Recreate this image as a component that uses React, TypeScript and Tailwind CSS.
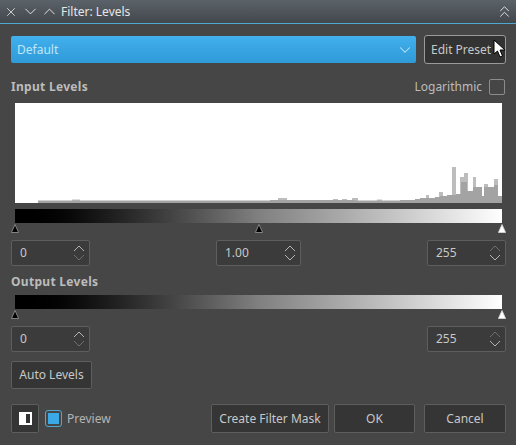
import { ChevronDown, ChevronUp, ChevronsUp, X } from 'lucide-react';

// histogram body, [x, height] steps in the 487px wide plot
const steps: [number, number][] = [
  [0, 0], [23, 2.5], [255, 3], [300, 3], [340, 2.5], [385, 3], [400, 4], [405, 5], [420, 6], [425, 7], [432, 8], [441, 9],
  [446, 21], [452, 12], [458, 16], [467, 7], [469, 16], [479, 18], [483, 7], [487, 0],
];

// thin paler spikes standing on the body, [x, width, height]
const spikes: [number, number, number][] = [
  [57, 8, 3.5], [263, 9, 5], [318, 5, 4], [327, 5, 4], [337, 6, 5], [362, 5, 3.5], [411, 3, 8], [424, 4, 11],
  [437, 4, 36], [445, 4, 26], [449, 4, 30], [458, 3, 26], [469, 4, 19], [479, 4, 24],
];

function histogramPath() {
  let d = 'M0 100';
  for (let i = 0; i < steps.length - 1; i++) {
    const [x, h] = steps[i];
    d += ` L${x} ${100 - h} L${steps[i + 1][0]} ${100 - h}`;
  }
  return d + ' L487 100 Z';
}

function Triangle({ light = false }: { light?: boolean }) {
  return (
    <svg width="8" height="9" viewBox="0 0 8 9" className="block">
      <path
        d="M4 0.5 L7.6 8.5 L0.4 8.5 Z"
        fill={light ? '#ffffff' : '#000000'}
        stroke={light ? '#d8d8d8' : '#9a9a9a'}
        strokeWidth="0.8"
      />
    </svg>
  );
}

function Spin({ value, className, dim }: { value: string; className: string; dim?: 'up' | 'down' }) {
  return (
    <div className={`flex h-[26px] items-center justify-between rounded-[2px] border border-[#5e5e5e] bg-[#3b3b3b] pl-2 pr-[3px] text-[#c8c8c8] ${className}`}>
      <span>{value}</span>
      <svg width="14" height="18" viewBox="0 0 14 18" fill="none" strokeWidth="1" className="block">
        <path d="M2 7 L7 2 L12 7" stroke={dim === 'up' ? '#6e6e6e' : '#b4b4b4'} />
        <path d="M2 11 L7 16 L12 11" stroke={dim === 'down' ? '#6e6e6e' : '#b4b4b4'} />
      </svg>
    </div>
  );
}

function Btn({ children, className }: { children: React.ReactNode; className: string }) {
  return (
    <button className={`flex items-center justify-center rounded-[2px] border border-[#5e5e5e] bg-[#353535] text-[#c8c8c8] ${className}`}>
      {children}
    </button>
  );
}

export default function App() {
  return (
    <div className="relative h-[445px] w-[516px] overflow-hidden bg-[#464646] font-['Noto_Sans',sans-serif] text-[12px] text-[#c8c8c8]">
      {/* Title bar */}
      <div className="flex h-[24px] items-center border-b border-[#4fa8cf] bg-gradient-to-b from-[#5b6269] to-[#42474c] pl-[4px] pr-[2px] text-[#e6e6e6]">
        <X size={14} strokeWidth={1.4} />
        <ChevronDown size={19} strokeWidth={1.2} className="ml-[3px]" />
        <ChevronUp size={19} strokeWidth={1.2} className="ml-[0px]" />
        <span className="ml-[2px]">Filter: Levels</span>
        <ChevronsUp size={19} strokeWidth={1.2} className="ml-auto" />
      </div>

      <div className="flex flex-col pl-[11px] pr-[10px]">
        {/* Preset row */}
        <div className="mt-[11px] flex items-center justify-between">
          <div className="flex h-[27px] w-[405px] items-center justify-between rounded-[2px] bg-gradient-to-b from-[#41b0ec] to-[#2f9ad8] pl-1.5 pr-[2px] text-[#bfe6fa]">
            <span>Default</span>
            <ChevronDown size={18} strokeWidth={1.4} />
          </div>
          <Btn className="h-[29px] w-[82px] !justify-start rounded-[3px] !border-[#9a9a9a] !bg-[#333333] pl-[6px]">Edit Preset</Btn>
        </div>

        {/* Input levels header */}
        <div className="mt-[14px] flex h-[17px] items-center justify-between">
          <span className="font-bold tracking-[0.3px] text-[#bcbcbc]">Input Levels</span>
          <div className="mr-px flex items-center gap-[7px]">
            <span className="text-[#bcbcbc]">Logarithmic</span>
            <div className="h-4 w-4 rounded-[2px] border border-[#8c8c8c]" />
          </div>
        </div>

        {/* Histogram */}
        <div className="ml-1 mt-[8px] h-[100px] w-[487px] bg-white">
          <svg width="487" height="100" viewBox="0 0 487 100" className="block">
            {spikes.map(([x, w, h]) => (
              <rect key={x} x={x} y={100 - h} width={w} height={h} fill="#bdbdbd" />
            ))}
            <path d={histogramPath()} fill="#a3a3a3" />
          </svg>
        </div>
        <div className="ml-1 mt-[6px] h-[14px] w-[487px] bg-gradient-to-r from-black via-[#808080] to-white" />
        <div className="mt-[1px] flex h-[9px] w-[495px] justify-between">
          <Triangle />
          <Triangle />
          <Triangle light />
        </div>

        <div className="mt-[7px] flex w-[495px] items-center justify-between">
          <Spin value="0" dim="down" className="w-[79px]" />
          <Spin value="1.00" className="w-[85px]" />
          <Spin value="255" dim="up" className="w-[79px]" />
        </div>

        <span className="mt-[7px] h-[17px] font-bold leading-[17px] tracking-[0.3px] text-[#bcbcbc]">Output Levels</span>
        <div className="ml-1 mt-[5px] h-[14px] w-[487px] bg-gradient-to-r from-black via-[#808080] to-white" />
        <div className="mt-[1px] flex h-[9px] w-[495px] justify-between">
          <Triangle />
          <Triangle light />
        </div>

        <div className="mt-[7px] flex w-[495px] items-center justify-between">
          <Spin value="0" dim="down" className="w-[79px]" />
          <Spin value="255" dim="up" className="w-[79px]" />
        </div>

        <Btn className="mt-[9px] h-[28px] w-[81px]">Auto Levels</Btn>

        {/* Footer */}
        <div className="mt-[15px] flex w-[495px] items-center">
          <Btn className="h-[29px] w-[28px]">
            <div className="flex h-[13px] w-[13px] bg-white p-[2px] pl-[7px]">
              <div className="h-full w-full bg-[#333333]" />
            </div>
          </Btn>
          <div className="ml-[6px] flex h-[17px] w-[17px] items-center justify-center rounded-[3px] border border-[#4fa8cf]">
            <div className="h-[11px] w-[11px] bg-[#3ba9e6]" />
          </div>
          <span className="ml-[5px] text-[#b4b4b4]">Preview</span>
          <Btn className="ml-auto h-[29px] w-[118px]">Create Filter Mask</Btn>
          <Btn className="ml-[5px] h-[29px] w-[81px]">OK</Btn>
          <Btn className="ml-[9px] h-[29px] w-[82px]">Cancel</Btn>
        </div>
      </div>

      {/* Mouse cursor */}
      <svg width="14" height="20" viewBox="0 0 14 20" className="absolute left-[493px] top-[39px]">
        <path d="M1 1 L1 15 L4.5 12 L7 18 L9.5 17 L7 11 L12 11 Z" fill="#ffffff" stroke="#000000" strokeWidth="1" />
      </svg>
    </div>
  );
}
